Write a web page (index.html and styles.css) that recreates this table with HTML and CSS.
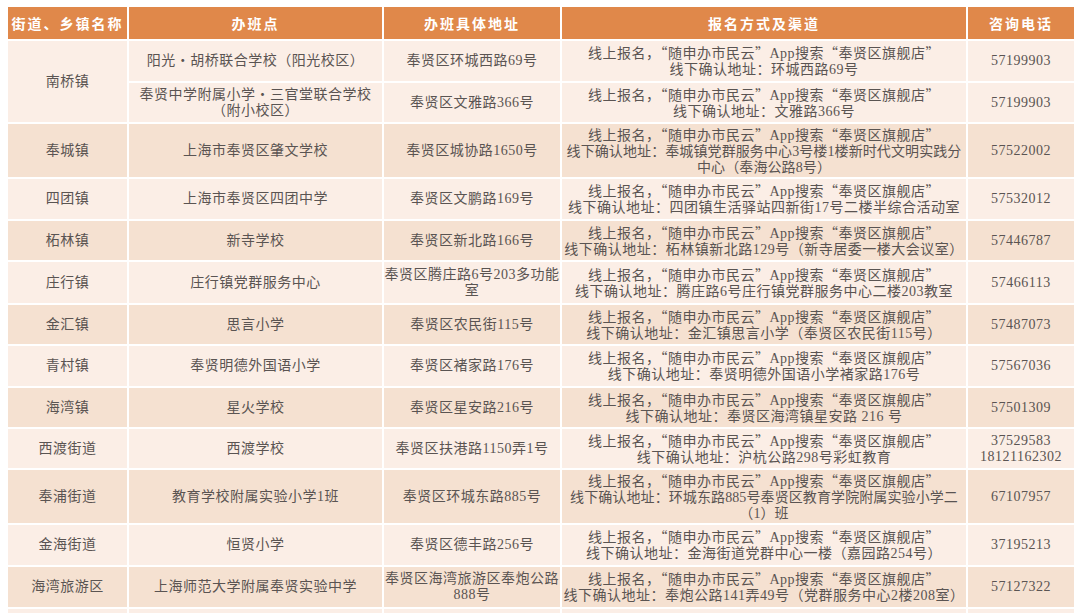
FILE: index.html
```html
<!DOCTYPE html>
<html lang="zh">
<head>
<meta charset="utf-8">
<title>办班点</title>
<link rel="stylesheet" href="styles.css">
</head>
<body>
<table class="grid">
  <colgroup>
    <col class="c1"><col class="c2"><col class="c3"><col class="c4"><col class="c5">
  </colgroup>
  <thead>
    <tr class="head">
      <th>街道、乡镇名称</th>
      <th>办班点</th>
      <th>办班具体地址</th>
      <th>报名方式及渠道</th>
      <th>咨询电话</th>
    </tr>
  </thead>
  <tbody>
    <tr class="light h40">
      <td rowspan="2">南桥镇</td>
      <td>阳光・胡桥联合学校（阳光校区）</td>
      <td>奉贤区环城西路69号</td>
      <td><span class="on">线上报名，<span class="q">“</span>随申办市民云<span class="q">”</span>App搜索<span class="q">“</span>奉贤区旗舰店<span class="q">”</span></span><br>线下确认地址：环城西路69号</td>
      <td>57199903</td>
    </tr>
    <tr class="light h39">
      <td>奉贤中学附属小学・三官堂联合学校<br>（附小校区）</td>
      <td>奉贤区文雅路366号</td>
      <td><span class="on">线上报名，<span class="q">“</span>随申办市民云<span class="q">”</span>App搜索<span class="q">“</span>奉贤区旗舰店<span class="q">”</span></span><br>线下确认地址：文雅路366号</td>
      <td>57199903</td>
    </tr>
    <tr class="dark h53">
      <td>奉城镇</td>
      <td>上海市奉贤区肇文学校</td>
      <td>奉贤区城协路1650号</td>
      <td class="tight"><span class="on">线上报名，<span class="q">“</span>随申办市民云<span class="q">”</span>App搜索<span class="q">“</span>奉贤区旗舰店<span class="q">”</span></span><br>线下确认地址：奉城镇党群服务中心3号楼1楼新时代文明实践分<br>中心（奉海公路8号）</td>
      <td>57522002</td>
    </tr>
    <tr class="light h40">
      <td>四团镇</td>
      <td>上海市奉贤区四团中学</td>
      <td>奉贤区文鹏路169号</td>
      <td><span class="on">线上报名，<span class="q">“</span>随申办市民云<span class="q">”</span>App搜索<span class="q">“</span>奉贤区旗舰店<span class="q">”</span></span><br>线下确认地址：四团镇生活驿站四新街17号二楼半综合活动室</td>
      <td>57532012</td>
    </tr>
    <tr class="dark h39">
      <td>柘林镇</td>
      <td>新寺学校</td>
      <td>奉贤区新北路166号</td>
      <td><span class="on">线上报名，<span class="q">“</span>随申办市民云<span class="q">”</span>App搜索<span class="q">“</span>奉贤区旗舰店<span class="q">”</span></span><br>线下确认地址：柘林镇新北路129号（新寺居委一楼大会议室）</td>
      <td>57446787</td>
    </tr>
    <tr class="light h41">
      <td>庄行镇</td>
      <td>庄行镇党群服务中心</td>
      <td>奉贤区腾庄路6号203多功能<br>室</td>
      <td><span class="on">线上报名，<span class="q">“</span>随申办市民云<span class="q">”</span>App搜索<span class="q">“</span>奉贤区旗舰店<span class="q">”</span></span><br>线下确认地址：腾庄路6号庄行镇党群服务中心二楼203教室</td>
      <td>57466113</td>
    </tr>
    <tr class="dark h39">
      <td>金汇镇</td>
      <td>思言小学</td>
      <td>奉贤区农民街115号</td>
      <td><span class="on">线上报名，<span class="q">“</span>随申办市民云<span class="q">”</span>App搜索<span class="q">“</span>奉贤区旗舰店<span class="q">”</span></span><br>线下确认地址：金汇镇思言小学（奉贤区农民街115号）</td>
      <td>57487073</td>
    </tr>
    <tr class="light h40">
      <td>青村镇</td>
      <td>奉贤明德外国语小学</td>
      <td>奉贤区褚家路176号</td>
      <td><span class="on">线上报名，<span class="q">“</span>随申办市民云<span class="q">”</span>App搜索<span class="q">“</span>奉贤区旗舰店<span class="q">”</span></span><br>线下确认地址：奉贤明德外国语小学褚家路176号</td>
      <td>57567036</td>
    </tr>
    <tr class="dark h39">
      <td>海湾镇</td>
      <td>星火学校</td>
      <td>奉贤区星安路216号</td>
      <td><span class="on">线上报名，<span class="q">“</span>随申办市民云<span class="q">”</span>App搜索<span class="q">“</span>奉贤区旗舰店<span class="q">”</span></span><br>线下确认地址：奉贤区海湾镇星安路 216 号</td>
      <td>57501309</td>
    </tr>
    <tr class="light h39">
      <td>西渡街道</td>
      <td>西渡学校</td>
      <td>奉贤区扶港路1150弄1号</td>
      <td><span class="on">线上报名，<span class="q">“</span>随申办市民云<span class="q">”</span>App搜索<span class="q">“</span>奉贤区旗舰店<span class="q">”</span></span><br>线下确认地址：沪杭公路298号彩虹教育</td>
      <td>37529583<br>18121162302</td>
    </tr>
    <tr class="dark h53">
      <td>奉浦街道</td>
      <td>教育学校附属实验小学1班</td>
      <td>奉贤区环城东路885号</td>
      <td class="tight"><span class="on">线上报名，<span class="q">“</span>随申办市民云<span class="q">”</span>App搜索<span class="q">“</span>奉贤区旗舰店<span class="q">”</span></span><br>线下确认地址：环城东路885号奉贤区教育学院附属实验小学二<br>（1）班</td>
      <td>67107957</td>
    </tr>
    <tr class="light h40">
      <td>金海街道</td>
      <td>恒贤小学</td>
      <td>奉贤区德丰路256号</td>
      <td><span class="on">线上报名，<span class="q">“</span>随申办市民云<span class="q">”</span>App搜索<span class="q">“</span>奉贤区旗舰店<span class="q">”</span></span><br>线下确认地址：金海街道党群中心一楼（嘉园路254号）</td>
      <td>37195213</td>
    </tr>
    <tr class="dark h40">
      <td>海湾旅游区</td>
      <td>上海师范大学附属奉贤实验中学</td>
      <td>奉贤区海湾旅游区奉炮公路<br>888号</td>
      <td><span class="on">线上报名，<span class="q">“</span>随申办市民云<span class="q">”</span>App搜索<span class="q">“</span>奉贤区旗舰店<span class="q">”</span></span><br>线下确认地址：奉炮公路141弄49号（党群服务中心2楼208室）</td>
      <td>57127322</td>
    </tr>
    <tr class="light h40">
      <td></td><td></td><td></td><td></td><td></td>
    </tr>
  </tbody>
</table>
</body>
</html>
```

FILE: styles.css
```css
html, body {
  margin: 0;
  padding: 0;
  background: #ffffff;
  overflow: hidden;
}

body {
  font-family: "Liberation Serif", "Noto Sans CJK SC", serif;
  color: #5a5452;
  font-size: 14px;
}

.grid {
  margin: 5px 0 0 6px;
  border-collapse: separate;
  border-spacing: 2px;
  table-layout: fixed;
  width: 1070px;
  background: #ffffff;
}

.c1 { width: 119px; }
.c2 { width: 253px; }
.c3 { width: 176px; }
.c4 { width: 404px; }
.c5 { width: 106px; }

.grid th,
.grid td {
  padding: 0;
  text-align: center;
  vertical-align: middle;
  white-space: nowrap;
  overflow: hidden;
}

.head th {
  height: 32px;
  background: #e0884a;
  color: #ffffff;
  font-weight: 700;
  font-size: 14px;
  letter-spacing: 2px;
  font-family: "Noto Sans CJK SC", sans-serif;
}

.grid td {
  line-height: 16px;
  font-weight: 400;
  letter-spacing: 0.5px;
}

.grid td.tight {
  letter-spacing: 0.1px;
}

.grid td .on {
  letter-spacing: 0.5px;
}

.q {
  font-family: "Noto Sans CJK SC", sans-serif;
}

.light td { background: #fbeee6; }
.dark td { background: #f5e1d1; }

.h39 td { height: 39px; }
.h40 td { height: 40px; }
.h41 td { height: 41px; }
.h53 td { height: 53px; }
```
